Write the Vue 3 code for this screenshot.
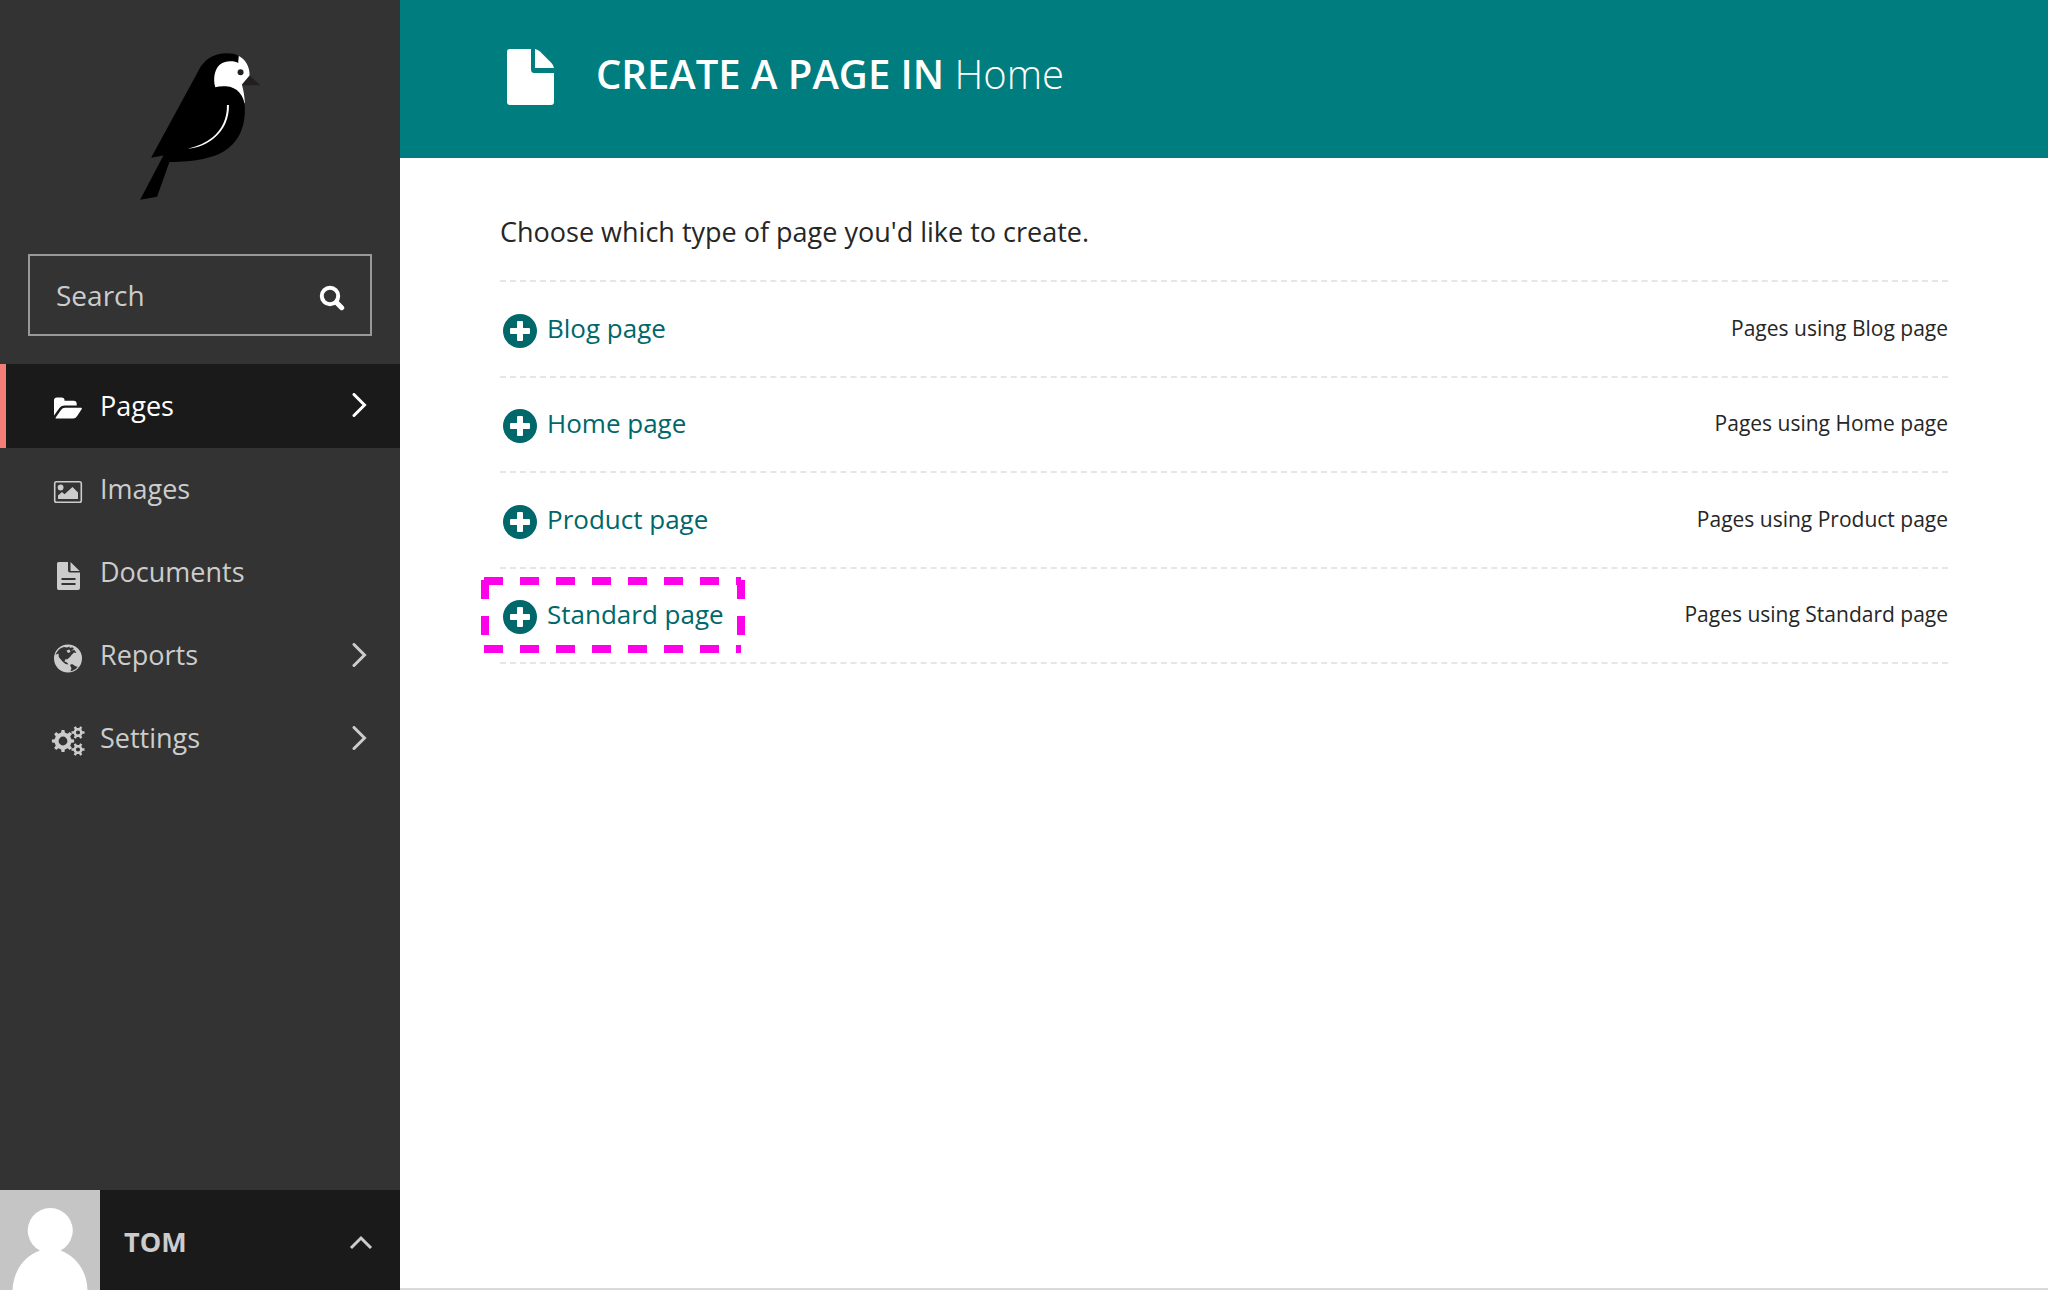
<script setup>
const menu = [
  { label: 'Pages', icon: 'folder', submenu: true, active: true },
  { label: 'Images', icon: 'image' },
  { label: 'Documents', icon: 'document' },
  { label: 'Reports', icon: 'globe', submenu: true },
  { label: 'Settings', icon: 'cogs', submenu: true },
]

const pageTypes = [
  { name: 'Blog page' },
  { name: 'Home page' },
  { name: 'Product page' },
  { name: 'Standard page', highlighted: true },
]

// Outline of a cog wheel with a round hole in the middle.
function gear(cx, cy, teeth, outer, inner, hole) {
  const step = (Math.PI * 2) / teeth
  const at = (r, a) => `${(cx + r * Math.cos(a)).toFixed(2)} ${(cy + r * Math.sin(a)).toFixed(2)}`
  const points = []
  for (let i = 0; i < teeth; i++) {
    const a = i * step
    points.push(at(inner, a - step * 0.27), at(outer, a - step * 0.17), at(outer, a + step * 0.17), at(inner, a + step * 0.27))
  }
  return `M${points.join('L')}ZM${cx - hole} ${cy}a${hole} ${hole} 0 1 0 ${hole * 2} 0a${hole} ${hole} 0 1 0 ${-hole * 2} 0Z`
}

const gears = [
  gear(13, 23, 8, 11.2, 8.6, 4.4),
  gear(28, 14.5, 6, 6.6, 4.6, 2.1),
  gear(28, 31.5, 6, 6.6, 4.6, 2.1),
].join('')
</script>

<template>
  <div class="layout">
    <aside class="sidebar">
      <a class="logo" href="#" aria-label="Dashboard">
        <svg width="120" height="147" viewBox="60 68 360 442" aria-hidden="true">
          <path fill="#231f20" d="M388 134L421 165L364 165Z" />
          <path fill="#fff" d="M356 76C378 88 390 110 389 136L366 163C371 182 374 198 375 220L345 195L280 180L275 130L300 90L354 92Z" />
          <path d="M356 76C346 71 334 69 320 69C280 69 250 90 235 122L93 383L130 376L60 509L111 500L148 396C225 396 290 384 326 354C362 324 376 284 375 232C374 196 352 170 318 168C306 167 296 168 286 171C277 138 286 92 332 93C342 93 350 95 355 98Z" />
          <circle cx="362" cy="126" r="9" fill="#231f20" />
          <path fill="#fff" d="M321 224L327 224C328 264 312 300 282 324C262 340 236 353 203 356C232 349 258 337 278 321C306 298 322 264 321 224Z" />
        </svg>
      </a>

      <form class="search" role="search" @submit.prevent>
        <input type="search" placeholder="Search" aria-label="Search" />
        <button type="submit" aria-label="Search">
          <svg width="26" height="26" viewBox="0 0 26 26" aria-hidden="true" fill="none" stroke="#fff">
            <circle cx="11" cy="11" r="8.2" stroke-width="4" />
            <path d="M17.5 17.5L22.7 22.7" stroke-width="5" stroke-linecap="round" />
          </svg>
        </button>
      </form>

      <nav aria-label="Main">
        <a v-for="item in menu" :key="item.label" href="#" class="item" :class="{ active: item.active }">
          <svg width="36" height="42" viewBox="0 0 36 42" aria-hidden="true" fill="currentColor">
            <path v-if="item.icon === 'folder'" d="M4 30.500V15.500Q4 12.500 7 12.500H11.500Q14.500 12.500 14.500 15V15.800H23.500Q26.700 15.800 26.700 19V20.500H14.500Q11.500 20.500 9.600 22.800ZM5.700 32.400L11 25Q12.400 22.700 15 22.700H31.200Q32.500 22.700 31.600 24.300L27 31.200Q25.600 33.600 23 33.600H6.500Q5 33.600 5.700 32.400Z" />
            <g v-else-if="item.icon === 'image'">
              <rect x="4.700" y="12.700" width="26.600" height="20.600" rx="1.800" fill="none" stroke="currentColor" stroke-width="1.600" />
              <circle cx="10.600" cy="18.500" r="2.900" />
              <path d="M8 30V26.500L12 23L14.500 25.200L22.500 18L28 23.500V30Z" />
            </g>
            <path v-else-if="item.icon === 'document'" fill-rule="evenodd" d="M8.500 10H18V18.500Q18 20.500 20 20.500H30V36Q30 38 28 38H8.500Q7 38 7 36V11.500Q7 10 8.500 10ZM20.500 10L29.700 19H20.500ZM11.500 26V28H25.500V26ZM11.500 31V33H25.500V31Z" />
            <g v-else-if="item.icon === 'globe'">
              <circle cx="18" cy="23.500" r="14" />
              <path fill="#333" d="M5.500 20C7 16 10 12.800 14 12L17 12.500L20 11.500L19.500 13L22.500 12.300L24 14L21 15.500L24.500 15L26.500 18L24 17.500L21.500 20L20 22L17 24.500L15.500 24L14.500 26.500L17 27.500L18.500 29.500L15.500 29L12.500 26.500L8.800 22L8.500 18.500L6 19.500ZM20 30L22 29L26 31.500L27.800 31.800C26 34.300 23 36 20.300 36.300L21.500 33.500Z" />
              <path d="M16.500 15.500L19.500 14.500L20.500 17L18 18Z" />
            </g>
            <path v-else fill-rule="evenodd" :d="gears" />
          </svg>
          <span class="label">{{ item.label }}</span>
          <svg v-if="item.submenu" width="16" height="26" viewBox="0 0 16 26" aria-hidden="true" fill="none" stroke="currentColor" stroke-width="3">
            <path d="M2 1.500L12.500 12L2 22.500" stroke-linecap="round" />
          </svg>
        </a>
      </nav>

      <button type="button" class="account">
        <svg width="100" height="100" viewBox="0 0 100 100" aria-hidden="true">
          <rect width="100" height="100" fill="#c5c5c5" />
          <path fill="#fff" d="M40 60.500A22.500 22.500 0 1 1 60.500 60.500C76 66 87 81 87.500 100H12.500C13.500 81 24 66 40 60.500Z" />
        </svg>
        <span class="name">Tom</span>
        <svg width="24" height="20" viewBox="0 0 24 20" aria-hidden="true" fill="none" stroke="currentColor" stroke-width="3">
          <path d="M2 18L12 8L22 18" />
        </svg>
      </button>
    </aside>

    <main>
      <header>
        <svg width="96" height="64" viewBox="0 0 96 64" aria-hidden="true" fill="#fff">
          <path d="M10 8H31V28Q31 32 34 32H54V61Q54 64 51 64H10Q7 64 7 61V11Q7 8 10 8ZM35 8Q38 8.500 40 10.500L51 21.500Q53.500 24 54 27H35Z" />
        </svg>
        <h1>Create a page in <span>Home</span></h1>
      </header>
      <div class="content">
        <p>Choose which type of page you'd like to create.</p>
        <ul>
          <li v-for="type in pageTypes" :key="type.name">
            <a class="create" href="#">
              <svg width="34" height="38" viewBox="0 0 34 38" aria-hidden="true">
                <circle cx="17" cy="21" r="17" fill="#00676a" />
                <path fill="#fff" d="M15 11H19Q20 11 20 12V18H26Q27 18 27 19V23Q27 24 26 24H20V30Q20 31 19 31H15Q14 31 14 30V24H8Q7 24 7 23V19Q7 18 8 18H14V12Q14 11 15 11Z" />
              </svg>
              <span>{{ type.name }}</span>
              <svg v-if="type.highlighted" class="marker" width="264" height="76" viewBox="0 0 264 76" aria-hidden="true">
                <path fill="none" stroke="#ff00ea" stroke-width="8" stroke-dasharray="19 17" d="M3 4H260M3 72H260M4 3V72M260 3V72" />
              </svg>
            </a>
            <a class="usage" href="#">Pages using {{ type.name }}</a>
          </li>
        </ul>
      </div>
    </main>
  </div>
</template>

<style>
body {
  margin: 0;
}
</style>

<style scoped>
.layout {
  display: flex;
  min-height: 100vh;
  font-family: "Open Sans", "Noto Sans", sans-serif;
  color: #262626;
  background: #fff;
}

a {
  color: inherit;
  text-decoration: none;
}

button {
  padding: 0;
  border: 0;
  font: inherit;
  color: inherit;
  background: none;
  cursor: pointer;
}

svg {
  flex: none;
  display: block;
}

.sidebar {
  flex: none;
  display: flex;
  flex-direction: column;
  width: 400px;
  background: #333;
  color: #ccc;
  font-size: 27px;
}

.logo {
  display: flex;
  justify-content: center;
  padding: 53px 0 54px;
}

.search {
  display: flex;
  align-items: center;
  box-sizing: border-box;
  height: 82px;
  margin: 0 28px 28px;
  padding: 0 25px 0 26px;
  border: 2px solid #999;
}

.search input {
  flex: 1;
  min-width: 0;
  padding: 0;
  border: 0;
  outline: 0;
  font: inherit;
  font-size: 28px;
  color: #ccc;
  background: none;
}

.search input::placeholder {
  color: #ccc;
  opacity: 1;
}

.search button {
  padding-top: 6px;
}

.item {
  display: flex;
  align-items: center;
  box-sizing: border-box;
  height: 83px;
  padding: 0 32px 0 50px;
}

.item.active {
  height: 84px;
  padding-left: 44px;
  border-left: 6px solid #f37e77;
  background: #1a1a1a;
  color: #fff;
}

.label {
  flex: 1;
  padding: 0 0 2px 14px;
}

.account {
  display: flex;
  align-items: center;
  margin-top: auto;
  padding-right: 27px;
  background: #1a1a1a;
  text-align: left;
}

.name {
  flex: 1;
  padding: 2px 0 0 24px;
  font-weight: 700;
  text-transform: uppercase;
}

main {
  flex: 1;
  box-sizing: border-box;
  min-width: 0;
  border-bottom: 2px solid #d9d9d9;
}

header {
  display: flex;
  align-items: center;
  padding: 41px 100px 53px;
  background: #007d7e;
  color: #fff;
}

h1 {
  margin: 0;
  padding-top: 2px;
  font-size: 40px;
  line-height: 60px;
  font-weight: 600;
  text-transform: uppercase;
}

h1 span {
  font-weight: 300;
  text-transform: none;
}

.content {
  padding: 55px 100px;
}

p {
  margin: 0 0 29px;
  font-size: 27px;
  line-height: 38px;
}

ul {
  display: grid;
  grid-auto-rows: 1fr;
  box-sizing: border-box;
  min-height: 384px;
  margin: 0;
  padding: 0;
  list-style: none;
  border-top: 2px dashed #e6e6e6;
}

li {
  display: flex;
  align-items: center;
  justify-content: space-between;
  border-bottom: 2px dashed #e6e6e6;
}

.create {
  position: relative;
  display: flex;
  gap: 10px;
  padding-left: 3px;
  font-size: 26px;
  line-height: 36px;
  color: #00676a;
}

.marker {
  position: absolute;
  top: -19px;
  left: -19px;
}

.usage {
  padding-bottom: 2px;
  font-size: 21px;
}
</style>
